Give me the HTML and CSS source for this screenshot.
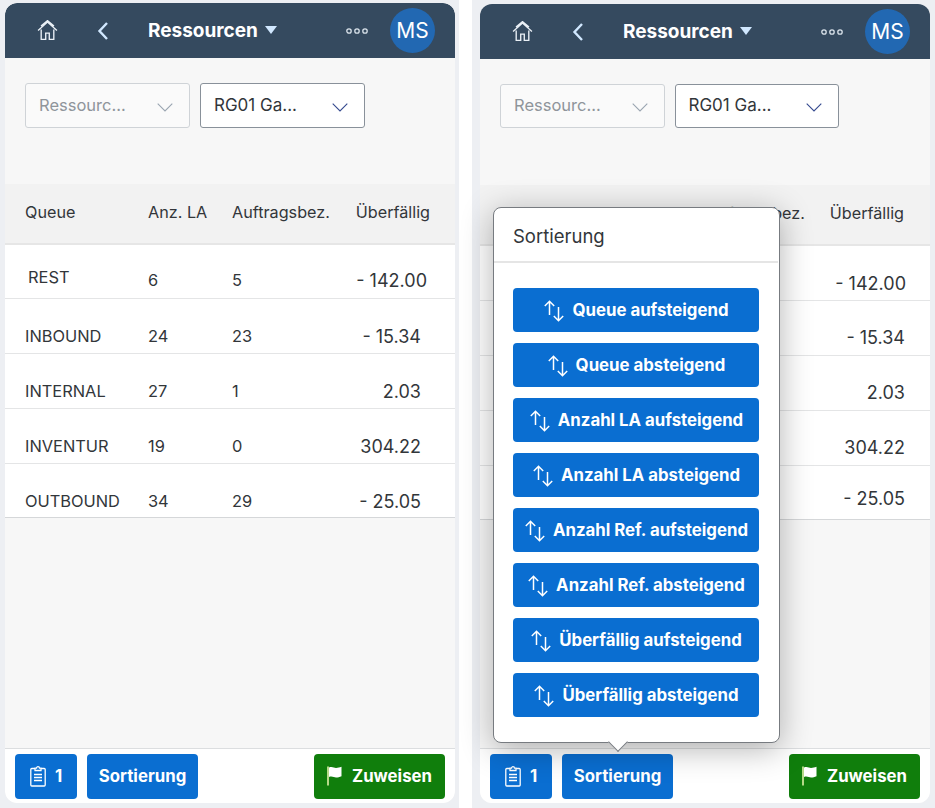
FILE: index.html
```html
<!DOCTYPE html>
<html lang="de">
<head>
<meta charset="utf-8">
<title>Ressourcen</title>
<link rel="stylesheet" href="styles.css">
</head>
<body>
<svg class="defs" aria-hidden="true">
  <symbol id="i-home" viewBox="0 0 20 20"><path d="M1 10 10 2l9 8M3.800 5.800 10 .6l6.200 5.200M4 9v9.500h4.300v-6h3.400v6H16V9" fill="none" stroke="currentColor" stroke-width="1.300"/></symbol>
  <symbol id="i-back" viewBox="0 0 12 20"><path d="M10 2 2.500 10l7.500 8" fill="none" stroke="currentColor" stroke-width="2.400"/></symbol>
  <symbol id="i-chev" viewBox="0 0 16 9"><path d="M.7.700 8 8l7.300-7.300" fill="none" stroke="currentColor" stroke-width="1.100"/></symbol>
  <symbol id="i-dots" viewBox="0 0 22 8"><g fill="none" stroke="currentColor" stroke-width="1.300"><circle cx="3" cy="4" r="2.200"/><circle cx="11" cy="4" r="2.200"/><circle cx="19" cy="4" r="2.200"/></g></symbol>
  <symbol id="i-clip" viewBox="0 0 16 22"><path d="M5 3.500H1.800a1 1 0 0 0-1 1V20a1 1 0 0 0 1 1h12.400a1 1 0 0 0 1-1V4.500a1 1 0 0 0-1-1H11M5 5.500V3.200h1.500a1.500 1.500 0 0 1 3 0H11v2.300ZM4 9.500h8M4 12.500h8M4 15.500h8" fill="none" stroke="currentColor" stroke-width="1.300"/></symbol>
  <symbol id="i-flag" viewBox="0 0 16 20"><path d="M1 .5v19" stroke="#dff0a8" stroke-width="1.600"/><path d="M2 1.500c3-1.400 5 .4 7 .4 2 0 3.500-.4 5.500-1.100v9.500c-2 .8-3.500 1.200-5.500 1.200-2 0-4-1.800-7-.5Z" fill="currentColor"/></symbol>
  <symbol id="i-sort" viewBox="0 0 22 22"><path d="M6.500 15V1.500M1.800 6 6.500 1.300 11.200 6M15.500 7v13.500M10.800 16l4.700 4.700 4.700-4.700" fill="none" stroke="currentColor" stroke-width="1.500"/></symbol>
</svg>

<main class="screens">
  <section class="frame frame-left">
    <div class="phone">
      <header class="shell">
        <svg class="ic-home"><use href="#i-home"/></svg>
        <svg class="ic-back"><use href="#i-back"/></svg>
        <h1 class="title">Ressourcen<span class="caret"></span></h1>
        <svg class="ic-dots"><use href="#i-dots"/></svg>
        <span class="avatar">MS</span>
      </header>
      <div class="filters">
        <div class="select select-off"><span class="select-text">Ressourc...</span><svg class="ic-chev"><use href="#i-chev"/></svg></div>
        <div class="select"><span class="select-text">RG01 Ga...</span><svg class="ic-chev"><use href="#i-chev"/></svg></div>
      </div>
      <div class="table">
        <div class="row row-head"><span>Queue</span><span>Anz. LA</span><span>Auftragsbez.</span><span class="num">Überfällig</span></div>
        <div class="row row-rest"><span class="name-rest">REST</span><span>6</span><span>5</span><span class="num val val-wide">- 142.00</span></div>
        <div class="row"><span>INBOUND</span><span>24</span><span>23</span><span class="num val">- 15.34</span></div>
        <div class="row"><span>INTERNAL</span><span>27</span><span>1</span><span class="num val">2.03</span></div>
        <div class="row"><span>INVENTUR</span><span>19</span><span>0</span><span class="num val">304.22</span></div>
        <div class="row row-last"><span>OUTBOUND</span><span>34</span><span>29</span><span class="num val">- 25.05</span></div>
      </div>
      <footer class="bar">
        <button class="btn btn-count"><svg class="ic-clip"><use href="#i-clip"/></svg>1</button>
        <button class="btn btn-sort">Sortierung</button>
        <button class="btn btn-go"><svg class="ic-flag"><use href="#i-flag"/></svg>Zuweisen</button>
      </footer>
    </div>
  </section>

  <section class="frame frame-right">
    <div class="phone">
      <header class="shell">
        <svg class="ic-home"><use href="#i-home"/></svg>
        <svg class="ic-back"><use href="#i-back"/></svg>
        <h1 class="title">Ressourcen<span class="caret"></span></h1>
        <svg class="ic-dots"><use href="#i-dots"/></svg>
        <span class="avatar">MS</span>
      </header>
      <div class="filters">
        <div class="select select-off"><span class="select-text">Ressourc...</span><svg class="ic-chev"><use href="#i-chev"/></svg></div>
        <div class="select"><span class="select-text">RG01 Ga...</span><svg class="ic-chev"><use href="#i-chev"/></svg></div>
      </div>
      <div class="table">
        <div class="row row-head"><span>Queue</span><span>Anz. LA</span><span>Auftragsbez.</span><span class="num">Überfällig</span></div>
        <div class="row row-rest"><span class="name-rest">REST</span><span>6</span><span>5</span><span class="num val val-wide">- 142.00</span></div>
        <div class="row"><span>INBOUND</span><span>24</span><span>23</span><span class="num val">- 15.34</span></div>
        <div class="row"><span>INTERNAL</span><span>27</span><span>1</span><span class="num val">2.03</span></div>
        <div class="row"><span>INVENTUR</span><span>19</span><span>0</span><span class="num val">304.22</span></div>
        <div class="row row-last"><span>OUTBOUND</span><span>34</span><span>29</span><span class="num val">- 25.05</span></div>
      </div>
      <footer class="bar">
        <button class="btn btn-count"><svg class="ic-clip"><use href="#i-clip"/></svg>1</button>
        <button class="btn btn-sort">Sortierung</button>
        <button class="btn btn-go"><svg class="ic-flag"><use href="#i-flag"/></svg>Zuweisen</button>
      </footer>
      <div class="popover">
        <div class="pop-title">Sortierung</div>
        <div class="pop-list">
          <button class="btn btn-pop"><svg class="ic-sort"><use href="#i-sort"/></svg>Queue aufsteigend</button>
          <button class="btn btn-pop"><svg class="ic-sort"><use href="#i-sort"/></svg>Queue absteigend</button>
          <button class="btn btn-pop"><svg class="ic-sort"><use href="#i-sort"/></svg>Anzahl LA aufsteigend</button>
          <button class="btn btn-pop"><svg class="ic-sort"><use href="#i-sort"/></svg>Anzahl LA absteigend</button>
          <button class="btn btn-pop"><svg class="ic-sort"><use href="#i-sort"/></svg>Anzahl Ref. aufsteigend</button>
          <button class="btn btn-pop"><svg class="ic-sort"><use href="#i-sort"/></svg>Anzahl Ref. absteigend</button>
          <button class="btn btn-pop"><svg class="ic-sort"><use href="#i-sort"/></svg>Überfällig aufsteigend</button>
          <button class="btn btn-pop"><svg class="ic-sort"><use href="#i-sort"/></svg>Überfällig absteigend</button>
        </div>
        <span class="pop-arrow"></span>
      </div>
    </div>
  </section>
</main>
</body>
</html>
```

FILE: styles.css
```css
* { box-sizing: border-box; }
html, body { margin: 0; padding: 0; height: 808px; overflow: hidden; background: #fff; }
body { color: #32363a; font-family: "Inter", "Noto Sans", sans-serif; }
.defs { position: absolute; width: 0; height: 0; }

.screens { display: flex; justify-content: space-between; width: 935px; height: 808px; }
.frame { background: #edeff3; height: 808px; width: 459px; padding: 3px 4px 5px 5px; }
.frame-right { width: 463px; padding: 4px 5px 5px 8px; }

.phone { position: relative; display: flex; flex-direction: column; width: 450px; height: 800px; background: #f7f7f7; border-radius: 12px; overflow: hidden; }
.frame-right .phone { overflow: visible; height: 799px; }

.shell { flex: none; display: flex; align-items: center; height: 55px; background: #354a5f; color: #fff; padding: 0 20px 0 32px; border-radius: 12px 12px 0 0; }
.ic-home { width: 21px; height: 21px; color: #eaf0f6; }
.ic-back { width: 12px; height: 20px; margin-left: 39px; color: #d1e8ff; }
.title { margin: 0 0 0 39px; font-size: 19px; font-weight: 700; line-height: 55px; flex: 1; }
.caret { display: inline-block; margin-left: 7px; vertical-align: 3px; border-style: solid; border-width: 8px 6px 0; border-color: #d1e8ff transparent transparent; }
.ic-dots { width: 22px; height: 8px; margin-right: 22px; color: #d9e2ea; }
.avatar { display: flex; align-items: center; justify-content: center; width: 45px; height: 45px; border-radius: 50%; background: #2268b2; font-size: 21px; }

.filters { flex: none; display: flex; gap: 10px; padding: 25px 20px 0; height: 126px; }
.select { display: flex; align-items: center; justify-content: space-between; width: 165px; height: 45px; padding: 0 16px 2px 13px; background: #fff; border: 1px solid #89919a; border-radius: 3px; font-size: 17px; }
.select-off { background: #fafafa; border-color: #cfd3d7; color: #8f959b; font-size: 16.500px; }
.select-off .ic-chev { color: #9aa5b1; }
.ic-chev { width: 16px; height: 9px; margin-top: 5px; color: #354a8f; }
.select-text { white-space: nowrap; }
.frame-right .select { width: 164.500px; height: 44px; }

.table { flex: none; }
.row { display: grid; grid-template-columns: 123px 84px 1fr 90px; align-items: center; height: 55px; padding: 20px 24px 0 20px; background: #fff; border-bottom: 1px solid #e4e5e6; font-size: 16.400px; line-height: 20px; }
.row-head { height: 61px; padding: 0 25px 4px 20px; background: #f2f2f2; border-bottom: 2px solid #e6e6e6; font-size: 16.200px; }
.row-rest { height: 54px; padding-top: 0; }
.row-rest > span { margin-top: 16px; }
.row-rest > .name-rest { margin: 10px 0 0 3px; }
.row-rest > .val { margin-top: 18px; }
.row-last { height: 54px; border-bottom-color: #d5d7d9; }
.num { text-align: right; white-space: nowrap; }
.val { margin-top: 2px; margin-right: 10px; font-size: 18px; }
.val-wide { margin-right: 4px; }
.frame-right .row { padding-top: 18px; }
.frame-right .row-head { padding-top: 0; padding-right: 26px; }
.frame-right .row-rest { height: 55px; padding-top: 0; }
.frame-right .row-rest > span { margin-top: 20px; }
.frame-right .row-rest > .val { margin-top: 22px; }
.frame-right .row-last { padding-top: 10px; }
.frame-right .val { margin-right: 1px; }
.frame-right .val-wide { margin-right: 0; }

.bar { margin-top: auto; flex: none; display: flex; gap: 10px; align-items: flex-start; height: 55px; padding: 5px 10px 0; background: #fff; border-top: 1px solid #dcdee0; border-radius: 0 0 12px 12px; }
.btn { display: flex; align-items: center; justify-content: center; height: 45px; padding: 0 0 2px; border: 0; border-radius: 4px; background: #0a6ed1; color: #fff; font-family: inherit; font-size: 16.800px; font-weight: 700; white-space: nowrap; }
.btn-count { width: 62px; gap: 9px; }
.ic-clip { width: 16px; height: 22px; }
.btn-sort { width: 111px; }
.btn-go { width: 131px; margin-left: auto; gap: 9px; background: #107e0c; }
.ic-flag { width: 16px; height: 20px; }

.popover { position: absolute; left: 13px; top: 203px; width: 287px; height: 536px; background: #fff; border: 1px solid #777b80; border-radius: 8px; box-shadow: 0 6px 32px rgba(0, 0, 0, .3); }
.pop-title { height: 55px; padding: 0 19px; line-height: 56px; font-size: 18.500px; border-bottom: 2px solid #e5e5e5; margin-right: 1px; }
.pop-list { display: flex; flex-direction: column; gap: 11px; padding: 25px 20px 0 19px; }
.btn-pop { width: 246px; height: 44px; gap: 7px; padding-bottom: 0; }
.ic-sort { width: 22px; height: 22px; margin-top: 2px; }
.pop-arrow { position: absolute; left: 117px; bottom: -7px; width: 14px; height: 14px; background: #fff; border-right: 1px solid #777b80; border-bottom: 1px solid #777b80; transform: rotate(45deg); }
```
